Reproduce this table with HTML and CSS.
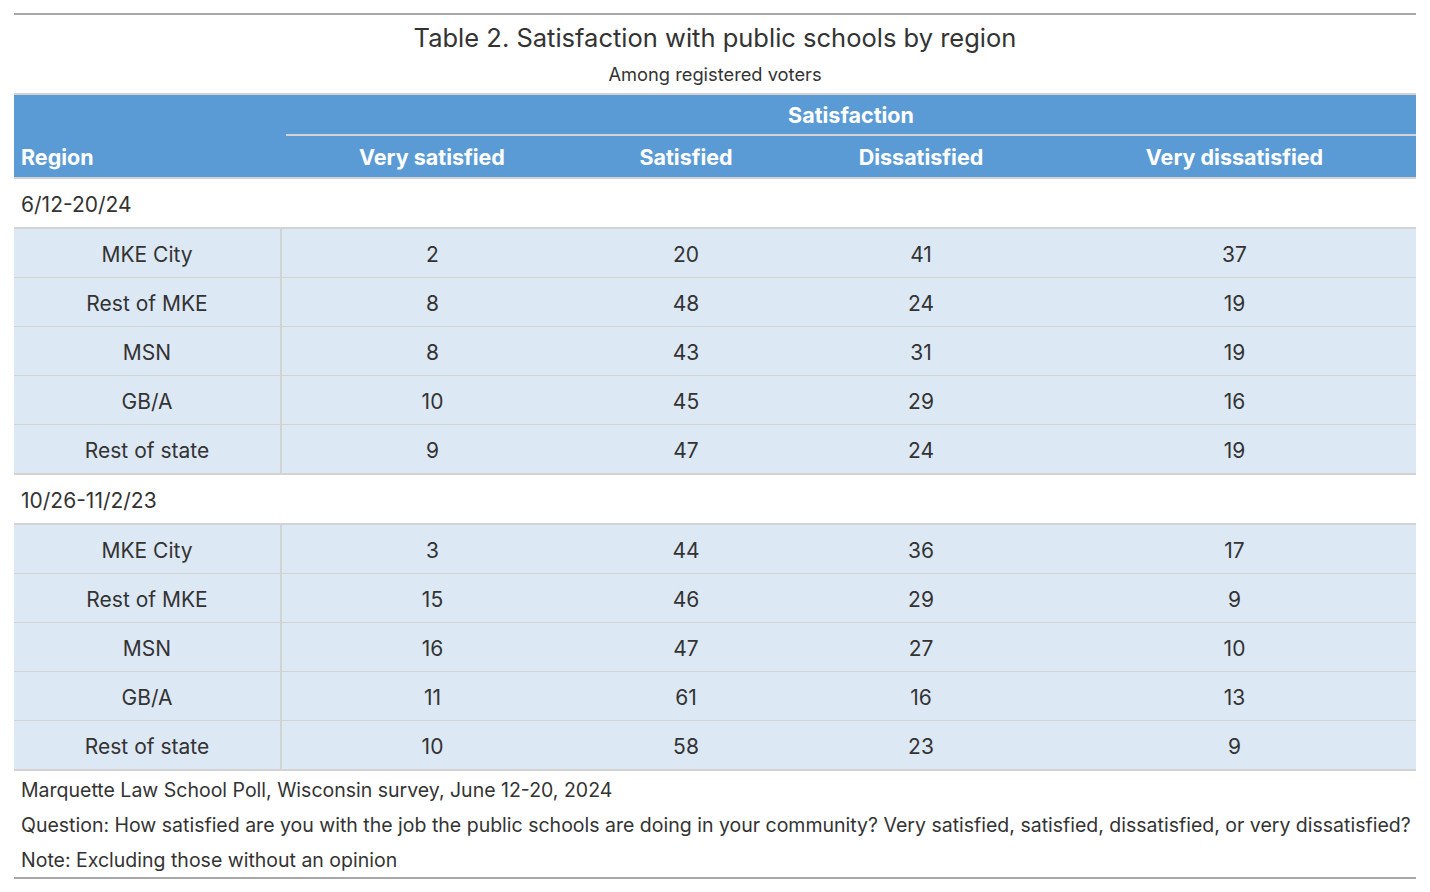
FILE: index.html
```html
<!DOCTYPE html>
<html lang="en">
<head>
<meta charset="utf-8">
<title>Table 2. Satisfaction with public schools by region</title>
<link rel="stylesheet" href="styles.css">
</head>
<body>
<div class="wrap">
<table class="gt">
  <colgroup>
    <col class="c-stub">
    <col class="c-1">
    <col class="c-2">
    <col class="c-3">
    <col class="c-4">
  </colgroup>
  <thead>
    <tr class="heading">
      <th colspan="5" class="title-cell">
        <div class="title">Table 2. Satisfaction with public schools by region</div>
        <div class="subtitle">Among registered voters</div>
      </th>
    </tr>
    <tr class="spanner-row">
      <th class="col-head stub-head" rowspan="2">Region</th>
      <th class="spanner-cell" colspan="4"><div class="spanner">Satisfaction</div></th>
    </tr>
    <tr class="label-row">
      <th class="col-head">Very satisfied</th>
      <th class="col-head">Satisfied</th>
      <th class="col-head">Dissatisfied</th>
      <th class="col-head">Very dissatisfied</th>
    </tr>
  </thead>
  <tbody>
    <tr class="group"><td colspan="5">6/12-20/24</td></tr>
    <tr class="row"><td class="stub">MKE City</td><td>2</td><td>20</td><td>41</td><td>37</td></tr>
    <tr class="row"><td class="stub">Rest of MKE</td><td>8</td><td>48</td><td>24</td><td>19</td></tr>
    <tr class="row"><td class="stub">MSN</td><td>8</td><td>43</td><td>31</td><td>19</td></tr>
    <tr class="row"><td class="stub">GB/A</td><td>10</td><td>45</td><td>29</td><td>16</td></tr>
    <tr class="row last"><td class="stub">Rest of state</td><td>9</td><td>47</td><td>24</td><td>19</td></tr>
    <tr class="group"><td colspan="5">10/26-11/2/23</td></tr>
    <tr class="row"><td class="stub">MKE City</td><td>3</td><td>44</td><td>36</td><td>17</td></tr>
    <tr class="row"><td class="stub">Rest of MKE</td><td>15</td><td>46</td><td>29</td><td>9</td></tr>
    <tr class="row"><td class="stub">MSN</td><td>16</td><td>47</td><td>27</td><td>10</td></tr>
    <tr class="row"><td class="stub">GB/A</td><td>11</td><td>61</td><td>16</td><td>13</td></tr>
    <tr class="row last"><td class="stub">Rest of state</td><td>10</td><td>58</td><td>23</td><td>9</td></tr>
  </tbody>
  <tfoot>
    <tr class="note first"><td colspan="5">Marquette Law School Poll, Wisconsin survey, June 12-20, 2024</td></tr>
    <tr class="note"><td colspan="5">Question: How satisfied are you with the job the public schools are doing in your community? Very satisfied, satisfied, dissatisfied, or very dissatisfied?</td></tr>
    <tr class="note lastnote"><td colspan="5">Note: Excluding those without an opinion</td></tr>
  </tfoot>
</table>
</div>
</body>
</html>
```

FILE: styles.css
```css
html, body {
  margin: 0;
  padding: 0;
  background: #ffffff;
}

.wrap {
  padding: 13px 14px 0 14px;
}

.gt {
  width: 1402px;
  border-collapse: collapse;
  table-layout: fixed;
  font-family: Inter, "Noto Sans", "Liberation Sans", sans-serif;
  color: #333333;
  font-size: 21px;
  border-top: 2px solid #a8a8a8;
  border-bottom: 2px solid #a8a8a8;
}

.c-stub { width: 267px; }
.c-1 { width: 302px; }
.c-2 { width: 206px; }
.c-3 { width: 264px; }
.c-4 { width: 363px; }

.title-cell {
  padding: 0;
  height: 78px;
  text-align: center;
  font-weight: normal;
  border-bottom: 2px solid #d3d3d3;
  vertical-align: top;
}

.title {
  font-size: 25.5px;
  line-height: 32px;
  margin-top: 7px;
  color: #333333;
}

.subtitle {
  font-size: 18.3px;
  line-height: 22px;
  margin-top: 9px;
  color: #333333;
}

.spanner-row th,
.label-row th {
  background: #5b9bd5;
  color: #ffffff;
  font-weight: bold;
  font-size: 21.5px;
  padding: 0;
}

.spanner-cell {
  height: 41px;
  padding: 0 0 0 5px !important;
  vertical-align: bottom;
}

.spanner {
  border-bottom: 2px solid #d3d3d3;
  text-align: center;
  line-height: 20px;
  padding-bottom: 9px;
}

.label-row th {
  height: 40px;
  text-align: center;
  vertical-align: middle;
  border-bottom: 2px solid #d3d3d3;
  line-height: 20px;
  padding-top: 1px;
}

.stub-head {
  text-align: left;
  vertical-align: bottom !important;
  padding: 0 0 10px 7px !important;
  border-bottom: 2px solid #d3d3d3;
  line-height: 20px;
}

.group td {
  height: 45px;
  padding: 3px 0 0 7px;
  text-align: left;
  vertical-align: middle;
  border-top: 2px solid #d3d3d3;
  border-bottom: 2px solid #d3d3d3;
  background: #ffffff;
  line-height: 24px;
}

.row td {
  height: 45px;
  padding: 3px 5px 0 5px;
  background: #dde8f5;
  text-align: center;
  vertical-align: middle;
  border-bottom: 1px solid #d3d3d3;
  line-height: 24px;
}

.row.last td {
  border-bottom: 2px solid #d3d3d3;
}

.row td.stub {
  border-right: 2px solid #d3d3d3;
}

.note td {
  height: 35px;
  padding: 0 0 0 7px;
  font-size: 19.5px;
  line-height: 24px;
  vertical-align: middle;
  text-align: left;
}

.note.first td {
  height: 34px;
  padding-top: 2px;
}
```
